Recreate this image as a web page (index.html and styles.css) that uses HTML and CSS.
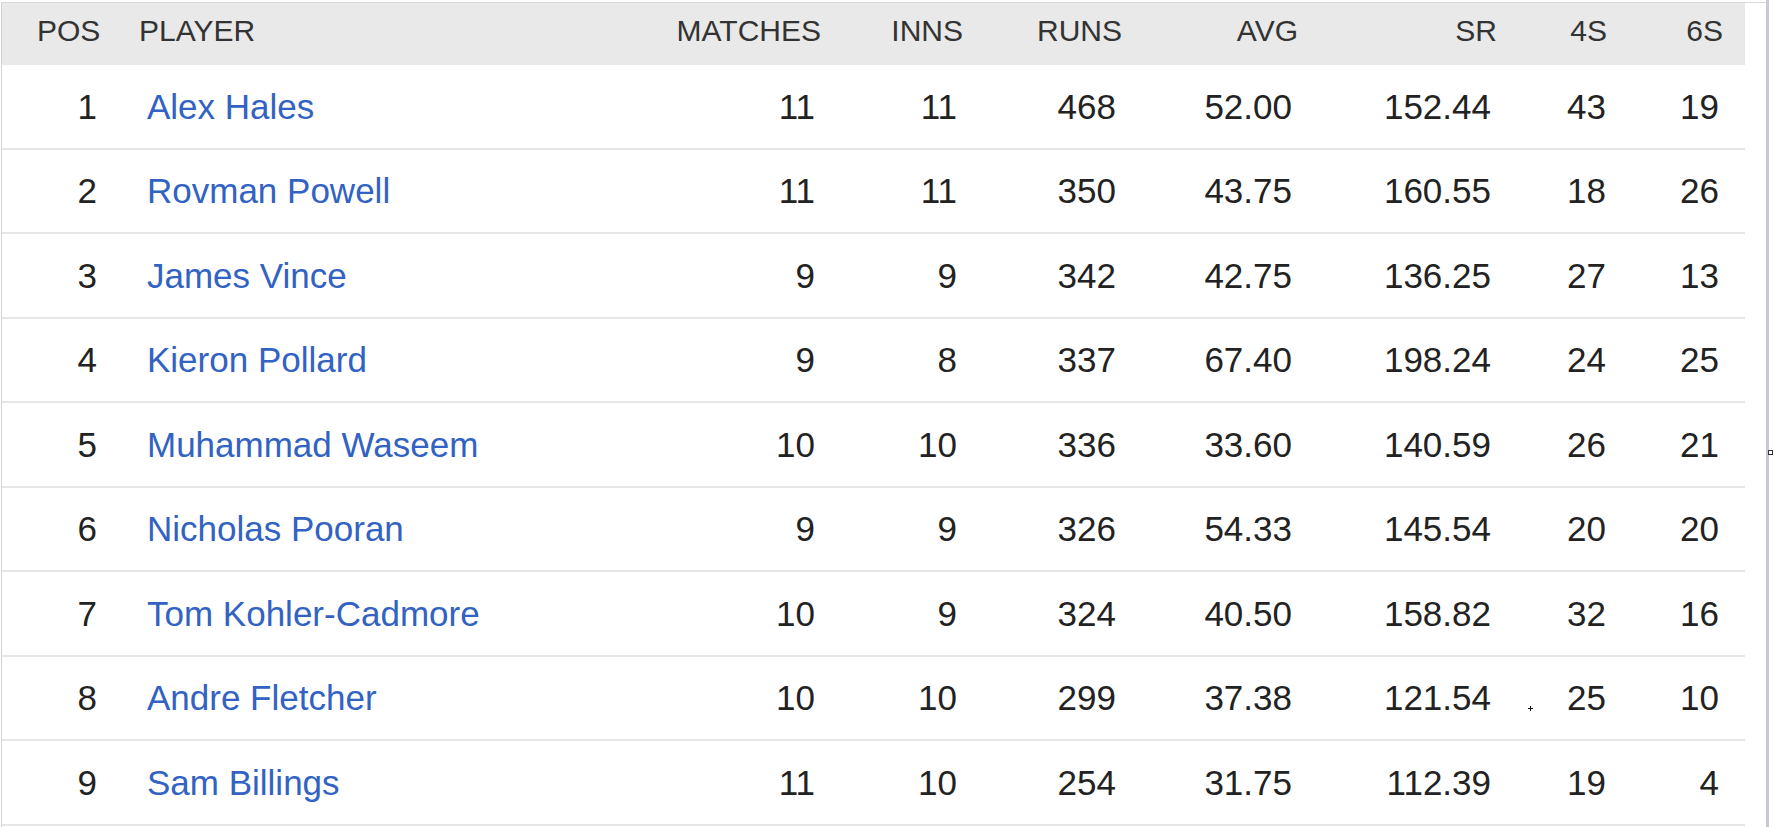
FILE: index.html
```html
<!DOCTYPE html>
<html lang="en">
<head>
<meta charset="utf-8">
<title>Most runs</title>
<link rel="stylesheet" href="styles.css">
</head>
<body>
<div class="frame">
  <div class="panel">
    <div class="stats" role="table">
      <div class="row head" role="row">
        <div class="cell pos" role="columnheader">POS</div>
        <div class="cell player" role="columnheader">PLAYER</div>
        <div class="cell num" role="columnheader">MATCHES</div>
        <div class="cell num" role="columnheader">INNS</div>
        <div class="cell num" role="columnheader">RUNS</div>
        <div class="cell num" role="columnheader">AVG</div>
        <div class="cell num" role="columnheader">SR</div>
        <div class="cell num fours" role="columnheader">4S</div>
        <div class="cell num" role="columnheader">6S</div>
      </div>
      <div class="row data" role="row">
        <div class="cell pos">1</div><div class="cell player"><a href="#">Alex Hales</a></div>
        <div class="cell num">11</div><div class="cell num">11</div><div class="cell num">468</div>
        <div class="cell num">52.00</div><div class="cell num">152.44</div><div class="cell num fours">43</div><div class="cell num">19</div>
      </div>
      <div class="row data" role="row">
        <div class="cell pos">2</div><div class="cell player"><a href="#">Rovman Powell</a></div>
        <div class="cell num">11</div><div class="cell num">11</div><div class="cell num">350</div>
        <div class="cell num">43.75</div><div class="cell num">160.55</div><div class="cell num fours">18</div><div class="cell num">26</div>
      </div>
      <div class="row data" role="row">
        <div class="cell pos">3</div><div class="cell player"><a href="#">James Vince</a></div>
        <div class="cell num">9</div><div class="cell num">9</div><div class="cell num">342</div>
        <div class="cell num">42.75</div><div class="cell num">136.25</div><div class="cell num fours">27</div><div class="cell num">13</div>
      </div>
      <div class="row data" role="row">
        <div class="cell pos">4</div><div class="cell player"><a href="#">Kieron Pollard</a></div>
        <div class="cell num">9</div><div class="cell num">8</div><div class="cell num">337</div>
        <div class="cell num">67.40</div><div class="cell num">198.24</div><div class="cell num fours">24</div><div class="cell num">25</div>
      </div>
      <div class="row data" role="row">
        <div class="cell pos">5</div><div class="cell player"><a href="#">Muhammad Waseem</a></div>
        <div class="cell num">10</div><div class="cell num">10</div><div class="cell num">336</div>
        <div class="cell num">33.60</div><div class="cell num">140.59</div><div class="cell num fours">26</div><div class="cell num">21</div>
      </div>
      <div class="row data" role="row">
        <div class="cell pos">6</div><div class="cell player"><a href="#">Nicholas Pooran</a></div>
        <div class="cell num">9</div><div class="cell num">9</div><div class="cell num">326</div>
        <div class="cell num">54.33</div><div class="cell num">145.54</div><div class="cell num fours">20</div><div class="cell num">20</div>
      </div>
      <div class="row data" role="row">
        <div class="cell pos">7</div><div class="cell player"><a href="#">Tom Kohler-Cadmore</a></div>
        <div class="cell num">10</div><div class="cell num">9</div><div class="cell num">324</div>
        <div class="cell num">40.50</div><div class="cell num">158.82</div><div class="cell num fours">32</div><div class="cell num">16</div>
      </div>
      <div class="row data" role="row">
        <div class="cell pos">8</div><div class="cell player"><a href="#">Andre Fletcher</a></div>
        <div class="cell num">10</div><div class="cell num">10</div><div class="cell num">299</div>
        <div class="cell num">37.38</div><div class="cell num">121.54</div><div class="cell num fours"><span class="speck"></span>25</div><div class="cell num">10</div>
      </div>
      <div class="row data" role="row">
        <div class="cell pos">9</div><div class="cell player"><a href="#">Sam Billings</a></div>
        <div class="cell num">11</div><div class="cell num">10</div><div class="cell num">254</div>
        <div class="cell num">31.75</div><div class="cell num">112.39</div><div class="cell num fours">19</div><div class="cell num">4</div>
      </div>
    </div>
  </div>
  <div class="edge"></div>
  <div class="gutter"></div>
  <span class="marker"></span>
</div>
</body>
</html>
```
FILE: styles.css
```css
html, body {
  margin: 0;
  padding: 0;
  background: #fff;
}

body {
  font-family: "Liberation Sans", Arial, sans-serif;
  width: 1774px;
  height: 827px;
  overflow: hidden;
}

.frame {
  position: relative;
  display: flex;
  height: 827px;
}

.panel {
  margin: 2px 0 0 1px;
  width: 1764px;
  border-top: 1px solid #d8d8d8;
  border-left: 1px solid #d0d4dc;
}

.edge {
  width: 3px;
  background: #c8cbd3;
}

.gutter {
  flex: 1;
}

.marker {
  position: absolute;
  left: 1768px;
  top: 450px;
  width: 5px;
  height: 5px;
  box-sizing: border-box;
  border: 1px solid #333;
  background: #fff;
}

.stats {
  width: 1743px;
}

.row {
  display: grid;
  grid-template-columns: 123px 435px 271px 142px 159px 176px 199px 110px 128px;
}

.head {
  height: 62px;
  background: #e9e9e9;
  color: #333;
  font-size: 30px;
  line-height: 30px;
  align-items: start;
}

.head .cell {
  padding-top: 13px;
}

.head .pos {
  padding-left: 35px;
}

.head .player {
  padding-left: 14px;
}

.head .num {
  padding-right: 10px;
}

.head .num:last-child {
  padding-right: 22px;
}

.data {
  height: 84.5px;
  box-sizing: border-box;
  border-bottom: 2px solid #e6e6e6;
  align-items: center;
  font-size: 35px;
  line-height: 35px;
  color: #222;
}

.data .pos {
  text-align: right;
  padding-right: 28px;
}

.data .player {
  padding-left: 22px;
}

.data .player a {
  color: #3262c2;
  text-decoration: none;
}

.data .num {
  padding-right: 16px;
}

.data .num.fours {
  padding-right: 11px;
}

.data .num:last-child {
  padding-right: 26px;
}

.num {
  text-align: right;
}

.cell {
  white-space: nowrap;
}

.speck {
  display: inline-block;
  width: 5px;
  height: 5px;
  margin-right: 34px;
  vertical-align: -1px;
  background:
    linear-gradient(#111, #111) center / 5px 1px no-repeat,
    linear-gradient(#111, #111) center / 1px 5px no-repeat;
}
```
